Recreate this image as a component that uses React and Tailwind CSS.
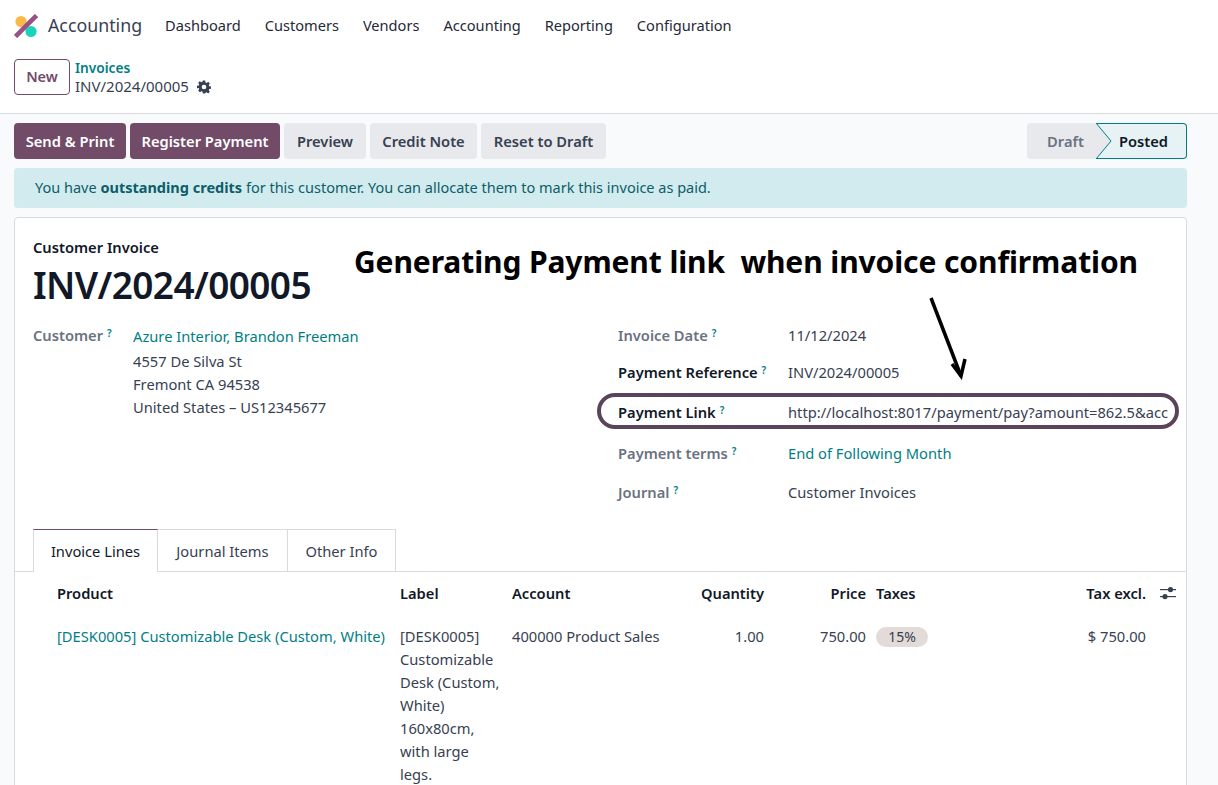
import React from "react";

const navItems = ["Dashboard", "Customers", "Vendors", "Accounting", "Reporting", "Configuration"];

const Help = () => (
  <sup className="ml-1 text-[10px] font-semibold text-[#017e84] relative -top-1">?</sup>
);

const ActionButton = ({ primary, className, children }) => (
  <button
    className={`h-9 rounded-[4px] pt-px text-[14.7px] font-semibold ${className} ${
      primary ? "bg-[#714b67] text-white" : "bg-[#e7e9ed] text-[#374151]"
    }`}
  >
    {children}
  </button>
);

const FormRow = ({ label, strong, children, className }) => (
  <div className={`flex items-start ${className}`}>
    <div className={`w-[170px] shrink-0 font-semibold ${strong ? "text-[#111827]" : "text-[#6b7280]"}`}>
      {label}
      <Help />
    </div>
    <div className="min-w-0 flex-1 overflow-hidden whitespace-nowrap text-[#374151]">{children}</div>
  </div>
);

const Logo = () => (
  <svg width="24" height="24" viewBox="0 0 24 24">
    <circle cx="7" cy="7.5" r="5.6" fill="#fbb945" />
    <circle cx="17" cy="17.5" r="5.6" fill="#1ad3bb" />
    <path d="M22.5 1.5 L1.5 22.5" stroke="#985184" strokeWidth="4.6" />
  </svg>
);

const Gear = () => (
  <svg width="14" height="14" viewBox="0 0 24 24" fill="#374151">
    <path
      fillRule="evenodd"
      d="M10 1h4l.6 3.2 1.9.8 2.7-1.8 2.8 2.8-1.8 2.7.8 1.9 3 .4v4l-3 .6-.8 1.9 1.8 2.7-2.8 2.8-2.7-1.8-1.9.8L14 23h-4l-.6-3.1-1.9-.8-2.7 1.8-2.8-2.8 1.8-2.7-.8-1.9L0 14v-4l3-.6.8-1.9L2 4.8 4.8 2l2.7 1.8 1.9-.8zM12 8a4 4 0 1 0 0 8 4 4 0 0 0 0-8z"
    />
  </svg>
);

const Sliders = () => (
  <svg width="16" height="14" viewBox="0 0 16 14" fill="#374151">
    <rect x="0" y="3" width="16" height="1.2" />
    <rect x="0" y="10" width="16" height="1.2" />
    <circle cx="10.5" cy="3.6" r="2.6" />
    <circle cx="5" cy="10.6" r="2.6" />
  </svg>
);

export default function App() {
  return (
    <div className="relative h-screen overflow-hidden bg-[#f9fafb] font-['Noto_Sans',sans-serif] text-[14px] text-[#374151]">
      {/* Navbar */}
      <nav className="flex h-[46px] items-center bg-white pl-[14px] pt-[5px]">
        <Logo />
        <span className="ml-[10px] mr-[23px] text-[17.8px] text-[#374151]">Accounting</span>
        <div className="flex gap-[24px] text-[14.6px] text-[#1f2937]">
          {navItems.map((item) => (
            <span key={item}>{item}</span>
          ))}
        </div>
      </nav>

      {/* Control panel */}
      <div className="flex h-[68px] items-start border-b border-[#d8dadd] bg-white pl-[14px] pt-[13px]">
        <button className="h-9 w-[56px] rounded-[4px] border border-[#714b67] text-[14.5px] font-semibold text-[#714b67]">
          New
        </button>
        <div className="-mt-px ml-[5px] leading-[19px]">
          <div className="text-[13.7px] font-semibold text-[#017e84]">Invoices</div>
          <div className="flex items-center gap-[8px] text-[15px]">
            INV/2024/00005
            <Gear />
          </div>
        </div>
      </div>

      {/* Actions */}
      <div className="flex items-center justify-between pl-[14px] pr-[31px] pt-[9px]">
        <div className="flex gap-[4px]">
          <ActionButton primary className="w-[112px]">Send &amp; Print</ActionButton>
          <ActionButton primary className="w-[150px]">Register Payment</ActionButton>
          <ActionButton className="w-[82px]">Preview</ActionButton>
          <ActionButton className="w-[107px]">Credit Note</ActionButton>
          <ActionButton className="w-[125px]">Reset to Draft</ActionButton>
        </div>
        <div className="flex h-9 text-[14.7px] font-semibold">
          <div className="flex w-[69px] items-center justify-center rounded-l-[4px] bg-[#e7e9ed] pl-[8px] text-[#6b7280]">
            Draft
          </div>
          <div className="relative flex w-[91px] items-center justify-end rounded-r-[4px] border border-l-0 border-[#017e84] bg-[#e6f2f3] pr-[18px] text-[#111827]">
            <svg className="absolute left-0 -top-px" width="16" height="36" viewBox="0 0 16 36">
              <path d="M0 0 L15 18 L0 36" fill="#e7e9ed" stroke="#017e84" strokeWidth="1" />
            </svg>
            Posted
          </div>
        </div>
      </div>

      {/* Alert */}
      <div className="ml-[14px] mr-[31px] mt-[9px] flex h-[40px] items-center rounded-[4px] bg-[#d1ebef] pl-[21px] text-[14.5px] text-[#0e5d68]">
        <span>
          You have <strong className="font-bold">outstanding credits</strong> for this customer. You can allocate them
          to mark this invoice as paid.
        </span>
      </div>

      {/* Sheet */}
      <div className="ml-[14px] mr-[31px] mt-[9px] h-[600px] rounded-t-[4px] border border-[#d8dadd] bg-white pt-[18px] text-[14.7px]">
        <div className="pl-[18px]">
          <div className="font-semibold text-[#111827]">Customer Invoice</div>
          <h1 className="mt-[3px] text-[37px] font-semibold leading-[48px] tracking-[-0.6px] text-[#111827]">
            INV/2024/00005
          </h1>
        </div>

        <div className="mt-[15px] flex pl-[18px]">
          <div className="flex w-[585px] items-start">
            <div className="w-[100px] shrink-0 font-semibold text-[#6b7280]">
              Customer
              <Help />
            </div>
            <div className="pt-px leading-[23px]">
              <div className="mb-[2px] text-[#017e84]">Azure Interior, Brandon Freeman</div>
              <div>4557 De Silva St</div>
              <div>Fremont CA 94538</div>
              <div>United States – US12345677</div>
            </div>
          </div>
          <div className="w-[552px]">
            <FormRow label="Invoice Date" className="h-[37px]">
              11/12/2024
            </FormRow>
            <FormRow label="Payment Reference" strong className="h-[40px]">
              INV/2024/00005
            </FormRow>
            <FormRow label="Payment Link" strong className="h-[41px]">
              http://localhost:8017/payment/pay?amount=862.5&amp;acc
            </FormRow>
            <FormRow label="Payment terms" className="h-[39px]">
              <span className="text-[#017e84]">End of Following Month</span>
            </FormRow>
            <FormRow label="Journal" className="h-[48px]">
              Customer Invoices
            </FormRow>
          </div>
        </div>

        {/* Tabs */}
        <div className="flex h-[43px] items-stretch border-b border-[#d8dadd] pl-[18px]">
          <div className="-mb-px flex w-[125px] items-center justify-center border border-b-0 border-[#d8dadd] border-t-[#714b67] bg-white text-[#111827]">
            Invoice Lines
          </div>
          <div className="flex w-[130px] items-center justify-center border-r border-t border-[#d8dadd]">Journal Items</div>
          <div className="flex w-[108px] items-center justify-center border-r border-t border-[#d8dadd]">Other Info</div>
        </div>

        {/* Lines table */}
        <div className="grid grid-cols-[343px_112px_178px_74px_102px_184px_96px_1fr] pl-[42px]">
          <div className="flex h-[41px] items-center font-semibold text-[#111827]">Product</div>
          <div className="flex h-[41px] items-center font-semibold text-[#111827]">Label</div>
          <div className="flex h-[41px] items-center font-semibold text-[#111827]">Account</div>
          <div className="flex h-[41px] items-center justify-end font-semibold text-[#111827]">Quantity</div>
          <div className="flex h-[41px] items-center justify-end font-semibold text-[#111827]">Price</div>
          <div className="flex h-[41px] items-center pl-[10px] font-semibold text-[#111827]">Taxes</div>
          <div className="flex h-[41px] items-center justify-end font-semibold text-[#111827]">Tax excl.</div>
          <div className="flex h-[41px] items-center pl-[14px]">
            <Sliders />
          </div>

          <div className="pt-[12px] leading-[23px] text-[#017e84]">[DESK0005] Customizable Desk (Custom, White)</div>
          <div className="pr-[8px] pt-[12px] leading-[23px]">
            [DESK0005] Customizable Desk (Custom, White) 160x80cm, with large legs.
          </div>
          <div className="pt-[12px] leading-[23px]">400000 Product Sales</div>
          <div className="pt-[12px] text-right leading-[23px]">1.00</div>
          <div className="pt-[12px] text-right leading-[23px]">750.00</div>
          <div className="pl-[10px] pt-[12px]">
            <span className="inline-flex h-[20px] w-[52px] items-center justify-center rounded-full bg-[#e2dbd8] text-[14px]">
              15%
            </span>
          </div>
          <div className="pt-[12px] text-right leading-[23px]">$ 750.00</div>
          <div />
        </div>
      </div>

      {/* Annotation */}
      <div className="absolute left-[354px] top-[243px] text-[30px] font-bold leading-[38px] tracking-[-0.1px] text-black">
        Generating Payment link&nbsp; when invoice confirmation
      </div>
      <svg className="absolute left-[925px] top-[295px]" width="45" height="85" viewBox="0 0 45 85">
        <path d="M6 3 L36 81" stroke="#000" strokeWidth="3.5" fill="none" />
        <path d="M27 69 L36 81 L40 64" stroke="#000" strokeWidth="3.5" fill="none" />
      </svg>
      <div className="absolute left-[597px] top-[393px] h-[36px] w-[582px] rounded-full border-4 border-[#5a4459]" />
    </div>
  );
}
